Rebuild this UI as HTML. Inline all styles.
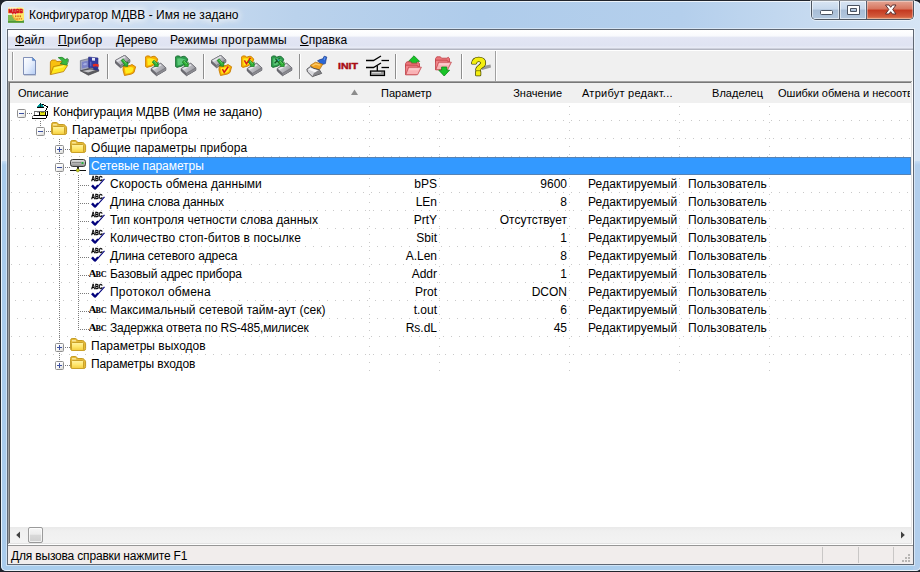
<!DOCTYPE html>
<html lang="ru">
<head>
<meta charset="utf-8">
<title>Конфигуратор МДВВ - Имя не задано</title>
<style>
html,body{margin:0;padding:0;}
body{width:920px;height:572px;overflow:hidden;background:#fff;font-family:"Liberation Sans",sans-serif;font-size:12px;color:#000;}
#win{position:absolute;left:0;top:0;width:920px;height:572px;overflow:hidden;background:#20242c;}
.abs{position:absolute;}
i{display:block;position:absolute;}
/* window frame */
#frame{position:absolute;left:1px;top:1px;width:920px;height:570px;border-radius:6px 6px 5px 5px;overflow:hidden;
 background:linear-gradient(90deg,#dde8f5 0%,#cfdff2 12%,#bad2ec 32%,#afcceb 52%,#b4cfec 74%,#c6daf0 88%,#d6e5f5 100%);}
#frame:after{content:"";position:absolute;left:0;top:0;right:0;bottom:0;border-radius:6px 6px 5px 5px;box-shadow:inset 0 0 0 1px rgba(255,255,255,.75);}
#fl1{position:absolute;left:0;top:28px;width:6px;height:132px;background:#dbe7f5;}
#fl2{position:absolute;left:0;top:160px;width:6px;height:410px;background:linear-gradient(#c6dcf3 0,#a9cbec 4px,#a9cbec 100%);}
#fr1{position:absolute;left:912px;top:28px;width:8px;height:132px;background:#d6e4f4;}
#fr2{position:absolute;left:912px;top:160px;width:8px;height:410px;background:linear-gradient(#c6dcf3 0,#b2ceec 4px,#b2ceec 100%);}
#fb{position:absolute;left:6px;top:563px;width:906px;height:7px;background:#aacdec;}
#title{position:absolute;left:29px;top:7px;height:16px;line-height:16px;font-size:12px;white-space:nowrap;color:#000;text-shadow:0 0 6px #fff,0 0 8px #fff,0 0 10px #fff;}
#cborder{position:absolute;left:7px;top:29px;width:907px;height:536px;box-sizing:border-box;border:1px solid #5f6773;box-shadow:0 0 0 1px rgba(255,255,255,.45);background:#f0f0f0;}
/* caption buttons */
#capbtns{position:absolute;left:811px;top:1px;width:103px;height:19px;border:1px solid #4d5560;border-top:none;border-radius:0 0 5px 5px;box-sizing:border-box;overflow:hidden;box-shadow:0 0 0 1px rgba(255,255,255,.5);}
.cb{position:absolute;top:0;height:18px;box-sizing:border-box;}
#bmin{left:0;width:28px;background:linear-gradient(#d9e5f3 0%,#c7d8ec 45%,#a8bdd6 50%,#b3c8df 100%);border-right:1px solid #566070;box-shadow:inset 0 0 0 1px rgba(255,255,255,.55);}
#bmax{left:28px;width:27px;background:linear-gradient(#d9e5f3 0%,#c7d8ec 45%,#a8bdd6 50%,#b3c8df 100%);border-right:1px solid #566070;box-shadow:inset 0 0 0 1px rgba(255,255,255,.55);}
#bclose{left:55px;width:46px;background:linear-gradient(#e4a594 0%,#d7745d 45%,#c3381f 50%,#d2593b 85%,#e08b60 100%);box-shadow:inset 0 0 0 1px rgba(255,255,255,.35);}
/* menubar */
#menubar{position:absolute;left:8px;top:30px;width:905px;height:18px;background:linear-gradient(#ffffff 0%,#fafbfd 30%,#eef0f8 38%,#e3e6f4 42%,#dfe3f2 85%,#e8ebf6 100%);}
#menuline{position:absolute;left:8px;top:48px;width:905px;height:1px;background:#cdd0dc;}
#menuline2{position:absolute;left:8px;top:49px;width:905px;height:1px;background:#b2b5c1;}
#menuline3{position:absolute;left:8px;top:50px;width:905px;height:1px;background:#ffffff;}
.mi{position:absolute;top:32px;height:16px;line-height:16px;white-space:nowrap;}
.mi u{text-decoration:underline;text-decoration-thickness:1px;text-underline-offset:1px;}
/* toolbar */
#toolbar{position:absolute;left:8px;top:51px;width:905px;height:30px;background:#f0f0f0;}
.sep{position:absolute;top:54px;width:1px;height:25px;background:#8e8e8e;}
.sep:after{content:"";position:absolute;left:1px;top:0;width:1px;height:25px;background:#fff;}
/* tree */
#treebox{position:absolute;left:8px;top:81px;width:905px;height:464px;background:#fff;}
#tb_t1{position:absolute;left:8px;top:81px;width:904px;height:1px;background:#a0a0a0;}
#tb_t2{position:absolute;left:9px;top:82px;width:902px;height:1px;background:#787878;}
#tb_l1{position:absolute;left:8px;top:81px;width:1px;height:463px;background:#a0a0a0;}
#tb_l2{position:absolute;left:9px;top:82px;width:1px;height:461px;background:#6e6e6e;}
#tb_r1{position:absolute;left:912px;top:81px;width:1px;height:464px;background:#fff;}
#tb_r2{position:absolute;left:911px;top:82px;width:1px;height:462px;background:#e3e3e3;}
#tb_b1{position:absolute;left:8px;top:544px;width:905px;height:1px;background:#fff;}
#tb_b2{position:absolute;left:9px;top:543px;width:903px;height:1px;background:#e3e3e3;}
#hdr{position:absolute;left:10px;top:83px;width:901px;height:20px;background:#f0f0f0;}
.h{position:absolute;top:86px;height:14px;line-height:14px;white-space:nowrap;font-size:11px;}
.hg{position:absolute;left:10px;width:901px;height:1px;background-image:linear-gradient(90deg,#c9c9c9 1px,transparent 1px);background-size:8px 1px;background-repeat:repeat-x;}
.vg{position:absolute;width:1px;background-image:linear-gradient(180deg,#c9c9c9 1px,transparent 1px);background-size:1px 8px;background-repeat:repeat-y;}
.vl{position:absolute;width:1px;background-image:linear-gradient(180deg,#7a7a7a 1px,transparent 1px);background-size:1px 2px;}
.hl{position:absolute;height:1px;background-image:linear-gradient(90deg,#7a7a7a 1px,transparent 1px);background-size:2px 1px;}
.t{position:absolute;height:16px;line-height:16px;white-space:nowrap;margin-top:1px;}
.t.sel{color:#fff;}
.selbar{position:absolute;height:18px;background:#3399ff;box-sizing:border-box;border:1px solid #5583b6;}
.bx{position:absolute;width:9px;height:9px;box-sizing:border-box;border:1px solid #8f8f8f;border-radius:1.5px;background:linear-gradient(135deg,#ffffff 0%,#fafafa 45%,#d8d8d4 100%);}
.bx .mn{left:1px;top:3px;width:5px;height:1px;background:#3c50a0;}
.bx .pl{left:3px;top:1px;width:1px;height:5px;background:#3c50a0;}
/* scrollbar */
#hscroll{position:absolute;left:10px;top:527px;width:901px;height:16px;background:linear-gradient(#e9e9e9 0%,#f0f0f0 25%,#f3f3f3 100%);}
#thumb{position:absolute;left:28px;top:527px;width:15px;height:16px;box-sizing:border-box;border:1px solid #9a9a9a;border-radius:2px;background:linear-gradient(#f6f6f6 0%,#ececec 45%,#d9d9d9 50%,#cfcfcf 100%);box-shadow:inset 0 0 0 1px rgba(255,255,255,.7);}
/* status */
#status{position:absolute;left:8px;top:545px;width:905px;height:19px;background:#f1edec;border-top:1px solid #969696;box-sizing:border-box;}
.spane{position:absolute;top:547px;width:1px;height:16px;background:#c9c7c6;}
</style>
</head>
<body>
<div id="win">
<div id="frame"><i id="fl1"></i><i id="fl2"></i><i id="fr1"></i><i id="fr2"></i><i id="fb"></i></div>
<svg class="abs" style="left:8px;top:7px" width="16" height="16" viewBox="0 0 16 16">
 <defs><clipPath id="icl"><rect x="0" y="0" width="16" height="16"/></clipPath></defs>
 <g clip-path="url(#icl)">
 <rect x="0" y="0" width="16" height="8" fill="#fff4b0" opacity=".55"/>
 <rect x="0" y="8" width="16" height="8" fill="#7cba52"/>
 <circle cx="11.5" cy="7.5" r="7" fill="#ffe764"/>
 <rect x="0" y="0" width="9" height="7.6" fill="#fdf3c4" opacity=".9"/>
 <path d="M4.5 7.6 Q5.5 12.5 10.5 13.2" stroke="#f0a830" stroke-width="1.2" fill="none"/>
 <rect x="0" y="14" width="16" height="2" fill="#4f9638"/>
 <rect x="0" y="15" width="16" height="1" fill="#6aaa4a"/>
 <text x="0.5" y="5.9" font-family="Liberation Sans, sans-serif" font-weight="bold" font-size="5.6" textLength="14.4" lengthAdjust="spacingAndGlyphs" fill="#d4141c" stroke="#d4141c" stroke-width=".6">МДВВ</text>
 <g fill="#d8681c"><rect x="7" y="8.4" width="1.4" height="1.8"/><rect x="9.3" y="8.4" width="1.4" height="1.8"/><rect x="11.6" y="8.4" width="1.4" height="1.8"/></g>
 <g fill="#e48a28"><rect x="8.4" y="11" width="1.3" height="1.6"/><rect x="10.6" y="11" width="1.3" height="1.6"/><rect x="12.8" y="11" width="1.3" height="1.6"/></g>
 </g>
</svg>
<div id="title">Конфигуратор МДВВ - Имя не задано</div>
<div id="capbtns">
 <div class="cb" id="bmin"></div><div class="cb" id="bmax"></div><div class="cb" id="bclose"></div>
</div>
<svg class="abs" style="left:811px;top:0" width="103" height="20" viewBox="0 0 103 20">
 <rect x="9.5" y="10.5" width="12" height="4" rx="1" fill="#fff" stroke="#4a5260" stroke-width="1"/>
 <path d="M36.5 5.5 H48.5 V14.5 H36.5 Z M39.5 8.5 V11.5 H45.5 V8.5 Z" fill="#fff" fill-rule="evenodd" stroke="#4a5260" stroke-width="1" stroke-linejoin="round"/>
 <path d="M74.5 5 H78 L79.7 7.3 L81.4 5 H85 L81.7 9.5 L85 14 H81.4 L79.7 11.7 L78 14 H74.5 L77.8 9.5 Z" fill="#fff" stroke="#5a3030" stroke-width="1" stroke-linejoin="round"/>
</svg>
<div id="cborder"></div>
<div id="menubar"></div><div id="menuline"></div><div id="menuline2"></div><div id="menuline3"></div>
<span class="mi" style="left:15px"><u>Ф</u>айл</span>
<span class="mi" style="left:58px;letter-spacing:.4px"><u>П</u>рибор</span>
<span class="mi" style="left:116px"><u>Д</u>ерево</span>
<span class="mi" style="left:170px;letter-spacing:.33px">Режимы программы</span>
<span class="mi" style="left:300px"><u>С</u>правка</span>
<div id="toolbar"></div>
<i style="left:12px;top:52px;width:1px;height:28px;background:#9a9a9a"></i><i style="left:13px;top:52px;width:1px;height:28px;background:#fff"></i>
<i class="sep" style="left:107px"></i>
<i class="sep" style="left:203px"></i>
<i class="sep" style="left:299px"></i>
<i class="sep" style="left:395px"></i>
<i class="sep" style="left:461px"></i>
<i style="left:495px;top:51px;width:1px;height:30px;background:#a0a0a0"></i><i style="left:496px;top:51px;width:1px;height:30px;background:#fff"></i>
<svg class="abs" style="left:22px;top:56px" width="16" height="20" viewBox="0 0 16 20">
<defs><linearGradient id="gdoc" x1="0" y1="0" x2="1" y2="1"><stop offset="0" stop-color="#ffffff"/><stop offset=".5" stop-color="#e6eefc"/><stop offset="1" stop-color="#b4ccf4"/></linearGradient></defs>
<path d="M1.5 1.5 H10.4 L13.5 4.6 V18.5 H1.5 Z" fill="url(#gdoc)" stroke="#7484b0" stroke-width=".9"/>
<path d="M10.4 1.5 V4.6 H13.5 Z" fill="#4a94e4" stroke="#6c80b4" stroke-width=".6"/>
<path d="M2 19.3 H14" stroke="#9aa4bc" stroke-width="1" opacity=".6"/>
</svg>
<svg class="abs" style="left:49px;top:55px" width="22" height="21" viewBox="0 0 22 21">
<path d="M1.3 19.4 L1.4 6.8 L3 5 H6.4 L8 6.5 L12.6 6.3 L13.4 9.4 L6 12 Z" fill="#f8c010" stroke="#b87400" stroke-width=".8" stroke-linejoin="round"/>
<path d="M1.6 19.6 L4.4 11.6 L17 9 L18.6 10.4 L14.6 16.6 Z" fill="#ffe61c" stroke="#b87800" stroke-width=".8" stroke-linejoin="round"/>
<path d="M5.4 12.4 L15.6 10.2 L14 12.4 L4.8 14.6 Z" fill="#fff870" opacity=".8"/>
<path d="M9.2 2.6 Q13.4 1 16.2 4.6 L18.4 3.4 L19.6 5 L17.8 10.2 L11.2 8.6 L13.4 7 Q12.2 4.4 9.2 2.6 Z" fill="#38b83e" stroke="#207c28" stroke-width=".7" stroke-linejoin="round"/>
<path d="M18.4 3.4 L19.6 5 L18.6 8" fill="none" stroke="#8c9490" stroke-width=".9"/>
</svg>
<svg class="abs" style="left:79px;top:55px" width="22" height="22" viewBox="0 0 22 22">
<path d="M1.4 5.6 L10.5 3.4 V13.6 L1.4 15.8 Z" fill="#a4a8bc" stroke="#70768c" stroke-width=".8" stroke-linejoin="round"/>
<path d="M2.8 7 L9.4 5.4 V12 L2.8 13.6 Z" fill="#7c84c8"/>
<path d="M4 9.4 Q6 7 8.2 8.8 Q6.4 11.6 4 9.4 Z" fill="#a4aee4"/>
<path d="M9.6 2 L19 3 V13.4 L9.6 12.4 Z" fill="#343ca0" stroke="#282e80" stroke-width=".6" stroke-linejoin="round"/>
<path d="M13 2.8 L16 3.1 V5.8 L13 5.5 Z" fill="#e4e6f4"/>
<path d="M11 6.6 L12.4 6.8 V11.4 L11 11.2 Z" fill="#5a64c4"/>
<path d="M1.4 15.8 L10.5 13.6 L19 14.2 L20 16 L9.4 20.2 Z" fill="#5c5c60" stroke="#444448" stroke-width=".7" stroke-linejoin="round"/>
<path d="M3.4 16 L10.8 14.4 L16.4 15 L9.2 17.6 Z" fill="#c4c4c8"/>
<path d="M13.6 9.4 Q16.4 8 19.8 9.6 L19.4 12 Q16.6 10.8 14.2 11.8 Z" fill="#e42c20"/>
<path d="M14 12.4 L19 13.2 L19.8 15.6 L14.6 14.8 Z" fill="#2c3288"/>
</svg>
<svg class="abs" style="left:115px;top:55px" width="22" height="23" viewBox="0 0 22 23"><defs><linearGradient id="gdev" x1="0" y1="0" x2="1" y2="0.6"><stop offset="0" stop-color="#e2e2e8"/><stop offset=".5" stop-color="#c2c2c8"/><stop offset="1" stop-color="#98989e"/></linearGradient></defs><g transform="translate(0,0) scale(1)">
<path d="M0.2 5.6 L9.7 0.3 L14.8 4.8 V7.2 L5.5 12.7 L0.3 8 Z" fill="#6c6c72" stroke="#55555c" stroke-width=".9" stroke-linejoin="round"/>
<path d="M5.5 10.2 L14.8 4.8 V7.2 L5.5 12.7 Z" fill="#8a8a90"/>
<path d="M0.2 5.6 L9.7 0.3 L14.8 4.8 L5.5 10.2 Z" fill="url(#gdev)" stroke="#6a6a70" stroke-width=".5" stroke-linejoin="round"/>
<path d="M1.6 5.6 L9.4 1.3 L10.6 2.3 L2.8 6.7 Z" fill="#f0f0f4" opacity=".75"/>
</g><g transform="translate(0,0)">
<path d="M8.2 11.5 L15 10.5 L17 9.5 L20.6 11.8 L19 17.5 L16.5 19 L9.5 20.5 L8 15 Z" fill="#f8b000" stroke="#c87c00" stroke-width=".9" stroke-linejoin="round"/>
<path d="M9.8 13 L16 12 L18.6 12.8 L17.6 16.6 L15.6 17.8 L10.6 18.8 Z" fill="#ffec20"/>
</g><g transform="translate(7.2,4.6) rotate(51.54629078329404)">
<path d="M0 -1.3 H5.48 V-3 L8.68 0 L5.48 3 V1.3 H0 Z" fill="#30b436" stroke="#1a7a22" stroke-width=".7" stroke-linejoin="round"/>
<path d="M0.4 -0.7 H5.68" stroke="#90e890" stroke-width=".7" opacity=".8"/>
</g></svg>
<svg class="abs" style="left:145px;top:55px" width="22" height="23" viewBox="0 0 22 23"><defs><linearGradient id="gdev" x1="0" y1="0" x2="1" y2="0.6"><stop offset="0" stop-color="#e2e2e8"/><stop offset=".5" stop-color="#c2c2c8"/><stop offset="1" stop-color="#98989e"/></linearGradient></defs><g transform="translate(0,0) scale(1)">
<path d="M0.3 2 L2 0.9 L4.5 1 L5.6 2.3 L8 1.3 L10 1.4 L12.8 4 L11.5 8 L7 11 L2 12.4 L0.4 11.4 Z" fill="#f8b000" stroke="#c87c00" stroke-width=".9" stroke-linejoin="round"/>
<path d="M2.2 3.4 L6 3.2 L10.6 4.6 L9.6 7.6 L6 9.8 L2.6 10.6 Z" fill="#ffec20"/>
</g><g transform="translate(6,8) scale(1)">
<path d="M0.2 5.6 L9.7 0.3 L14.8 4.8 V7.2 L5.5 12.7 L0.3 8 Z" fill="#6c6c72" stroke="#55555c" stroke-width=".9" stroke-linejoin="round"/>
<path d="M5.5 10.2 L14.8 4.8 V7.2 L5.5 12.7 Z" fill="#8a8a90"/>
<path d="M0.2 5.6 L9.7 0.3 L14.8 4.8 L5.5 10.2 Z" fill="url(#gdev)" stroke="#6a6a70" stroke-width=".5" stroke-linejoin="round"/>
<path d="M1.6 5.6 L9.4 1.3 L10.6 2.3 L2.8 6.7 Z" fill="#f0f0f4" opacity=".75"/>
</g><g transform="translate(8.2,6.2) rotate(47.202598161765806)">
<path d="M0 -1.3 H4.16 V-3 L7.36 0 L4.16 3 V1.3 H0 Z" fill="#30b436" stroke="#1a7a22" stroke-width=".7" stroke-linejoin="round"/>
<path d="M0.4 -0.7 H4.36" stroke="#90e890" stroke-width=".7" opacity=".8"/>
</g></svg>
<svg class="abs" style="left:175px;top:55px" width="22" height="23" viewBox="0 0 22 23"><defs><linearGradient id="gdev" x1="0" y1="0" x2="1" y2="0.6"><stop offset="0" stop-color="#e2e2e8"/><stop offset=".5" stop-color="#c2c2c8"/><stop offset="1" stop-color="#98989e"/></linearGradient></defs><g transform="translate(0,0) scale(1)">
<path d="M0.3 2 L2 0.9 L4.5 1 L5.6 2.3 L8 1.3 L10 1.4 L12.8 4 L11.5 8 L7 11 L2 12.4 L0.4 11.4 Z" fill="#2c9c4c" stroke="#1e6c36" stroke-width=".9" stroke-linejoin="round"/>
<path d="M2.2 3.4 L6 3.2 L10.6 4.6 L9.6 7.6 L6 9.8 L2.6 10.6 Z" fill="#5cc878"/>
</g><g transform="translate(6,8) scale(1)">
<path d="M0.2 5.6 L9.7 0.3 L14.8 4.8 V7.2 L5.5 12.7 L0.3 8 Z" fill="#6c6c72" stroke="#55555c" stroke-width=".9" stroke-linejoin="round"/>
<path d="M5.5 10.2 L14.8 4.8 V7.2 L5.5 12.7 Z" fill="#8a8a90"/>
<path d="M0.2 5.6 L9.7 0.3 L14.8 4.8 L5.5 10.2 Z" fill="url(#gdev)" stroke="#6a6a70" stroke-width=".5" stroke-linejoin="round"/>
<path d="M1.6 5.6 L9.4 1.3 L10.6 2.3 L2.8 6.7 Z" fill="#f0f0f4" opacity=".75"/>
</g><g transform="translate(8.2,6.2) rotate(47.202598161765806)">
<path d="M0 -1.3 H4.16 V-3 L7.36 0 L4.16 3 V1.3 H0 Z" fill="#30b436" stroke="#1a7a22" stroke-width=".7" stroke-linejoin="round"/>
<path d="M0.4 -0.7 H4.36" stroke="#90e890" stroke-width=".7" opacity=".8"/>
</g></svg>
<svg class="abs" style="left:211px;top:55px" width="22" height="23" viewBox="0 0 22 23"><defs><linearGradient id="gdev" x1="0" y1="0" x2="1" y2="0.6"><stop offset="0" stop-color="#e2e2e8"/><stop offset=".5" stop-color="#c2c2c8"/><stop offset="1" stop-color="#98989e"/></linearGradient></defs><g transform="translate(0,0) scale(1)">
<path d="M0.2 5.6 L9.7 0.3 L14.8 4.8 V7.2 L5.5 12.7 L0.3 8 Z" fill="#6c6c72" stroke="#55555c" stroke-width=".9" stroke-linejoin="round"/>
<path d="M5.5 10.2 L14.8 4.8 V7.2 L5.5 12.7 Z" fill="#8a8a90"/>
<path d="M0.2 5.6 L9.7 0.3 L14.8 4.8 L5.5 10.2 Z" fill="url(#gdev)" stroke="#6a6a70" stroke-width=".5" stroke-linejoin="round"/>
<path d="M1.6 5.6 L9.4 1.3 L10.6 2.3 L2.8 6.7 Z" fill="#f0f0f4" opacity=".75"/>
</g><g transform="translate(0,0)">
<path d="M8.2 11.5 L15 10.5 L17 9.5 L20.6 11.8 L19 17.5 L16.5 19 L9.5 20.5 L8 15 Z" fill="#f8b000" stroke="#c87c00" stroke-width=".9" stroke-linejoin="round"/>
<path d="M9.8 13 L16 12 L18.6 12.8 L17.6 16.6 L15.6 17.8 L10.6 18.8 Z" fill="#ffec20"/>
</g><g transform="translate(7.2,4.6) rotate(51.54629078329404)">
<path d="M0 -1.3 H5.48 V-3 L8.68 0 L5.48 3 V1.3 H0 Z" fill="#30b436" stroke="#1a7a22" stroke-width=".7" stroke-linejoin="round"/>
<path d="M0.4 -0.7 H5.68" stroke="#90e890" stroke-width=".7" opacity=".8"/>
</g><path d="M11.4 14.2 L13.2 17.4 L17.2 11.8" fill="none" stroke="#d81818" stroke-width="1.5"/></svg>
<svg class="abs" style="left:241px;top:55px" width="22" height="23" viewBox="0 0 22 23"><defs><linearGradient id="gdev" x1="0" y1="0" x2="1" y2="0.6"><stop offset="0" stop-color="#e2e2e8"/><stop offset=".5" stop-color="#c2c2c8"/><stop offset="1" stop-color="#98989e"/></linearGradient></defs><g transform="translate(0,0) scale(1)">
<path d="M0.3 2 L2 0.9 L4.5 1 L5.6 2.3 L8 1.3 L10 1.4 L12.8 4 L11.5 8 L7 11 L2 12.4 L0.4 11.4 Z" fill="#f8b000" stroke="#c87c00" stroke-width=".9" stroke-linejoin="round"/>
<path d="M2.2 3.4 L6 3.2 L10.6 4.6 L9.6 7.6 L6 9.8 L2.6 10.6 Z" fill="#ffec20"/>
</g><path d="M3.4 5.4 L5.4 8.8 L9.4 2.8" fill="none" stroke="#d81818" stroke-width="1.5"/><g transform="translate(6,8) scale(1)">
<path d="M0.2 5.6 L9.7 0.3 L14.8 4.8 V7.2 L5.5 12.7 L0.3 8 Z" fill="#6c6c72" stroke="#55555c" stroke-width=".9" stroke-linejoin="round"/>
<path d="M5.5 10.2 L14.8 4.8 V7.2 L5.5 12.7 Z" fill="#8a8a90"/>
<path d="M0.2 5.6 L9.7 0.3 L14.8 4.8 L5.5 10.2 Z" fill="url(#gdev)" stroke="#6a6a70" stroke-width=".5" stroke-linejoin="round"/>
<path d="M1.6 5.6 L9.4 1.3 L10.6 2.3 L2.8 6.7 Z" fill="#f0f0f4" opacity=".75"/>
</g><g transform="translate(8.2,6.2) rotate(47.202598161765806)">
<path d="M0 -1.3 H4.16 V-3 L7.36 0 L4.16 3 V1.3 H0 Z" fill="#30b436" stroke="#1a7a22" stroke-width=".7" stroke-linejoin="round"/>
<path d="M0.4 -0.7 H4.36" stroke="#90e890" stroke-width=".7" opacity=".8"/>
</g></svg>
<svg class="abs" style="left:271px;top:55px" width="22" height="23" viewBox="0 0 22 23"><defs><linearGradient id="gdev" x1="0" y1="0" x2="1" y2="0.6"><stop offset="0" stop-color="#e2e2e8"/><stop offset=".5" stop-color="#c2c2c8"/><stop offset="1" stop-color="#98989e"/></linearGradient></defs><g transform="translate(0,0) scale(1)">
<path d="M0.3 2 L2 0.9 L4.5 1 L5.6 2.3 L8 1.3 L10 1.4 L12.8 4 L11.5 8 L7 11 L2 12.4 L0.4 11.4 Z" fill="#2c9c4c" stroke="#1e6c36" stroke-width=".9" stroke-linejoin="round"/>
<path d="M2.2 3.4 L6 3.2 L10.6 4.6 L9.6 7.6 L6 9.8 L2.6 10.6 Z" fill="#5cc878"/>
</g><path d="M4.4 3.6 L8.4 8.4 M8.6 3.4 L3.6 8.2" fill="none" stroke="#145028" stroke-width="1.3"/><path d="M6.5 4.5 L9.5 6.5" stroke="#30c8c0" stroke-width="1.4"/><g transform="translate(6,8) scale(1)">
<path d="M0.2 5.6 L9.7 0.3 L14.8 4.8 V7.2 L5.5 12.7 L0.3 8 Z" fill="#6c6c72" stroke="#55555c" stroke-width=".9" stroke-linejoin="round"/>
<path d="M5.5 10.2 L14.8 4.8 V7.2 L5.5 12.7 Z" fill="#8a8a90"/>
<path d="M0.2 5.6 L9.7 0.3 L14.8 4.8 L5.5 10.2 Z" fill="url(#gdev)" stroke="#6a6a70" stroke-width=".5" stroke-linejoin="round"/>
<path d="M1.6 5.6 L9.4 1.3 L10.6 2.3 L2.8 6.7 Z" fill="#f0f0f4" opacity=".75"/>
</g><g transform="translate(8.2,6.2) rotate(47.202598161765806)">
<path d="M0 -1.3 H4.16 V-3 L7.36 0 L4.16 3 V1.3 H0 Z" fill="#30b436" stroke="#1a7a22" stroke-width=".7" stroke-linejoin="round"/>
<path d="M0.4 -0.7 H4.36" stroke="#90e890" stroke-width=".7" opacity=".8"/>
</g></svg>
<svg class="abs" style="left:306px;top:55px" width="24" height="23" viewBox="0 0 24 23">
<path d="M18.2 1.2 L20.8 2 L20 5 L19.4 8.6 L16 9.6 L11.5 5.8 L14 4.6 L16.8 3.8 Z" fill="#2a66d4" stroke="#1c3c8c" stroke-width=".7" stroke-linejoin="round"/>
<path d="M18.4 2 L19.6 2.4 L18.8 5.2 L17.6 4.8 Z" fill="#6a9cf0" opacity=".8"/>
<path d="M4.3 10.4 L9.4 7.2 L16.8 9.2 L13.4 14.8 L7.8 13.4 Z" fill="#f0a224" stroke="#a86808" stroke-width=".7" stroke-linejoin="round"/>
<path d="M6 10.2 L9.6 8.2 L14.6 9.6 L13.8 10.8 L9.6 9.8 L6.8 11.2 Z" fill="#ffd070" opacity=".85"/>
<path d="M0.9 14.2 L4.3 11.6 L7.8 13.4 L13.4 14.8 L15.6 18.4 L6.3 21.6 L1.4 16.8 Z" fill="#d8d8dc" stroke="#444448" stroke-width=".9" stroke-linejoin="round"/>
<path d="M2.4 14.6 L4.6 13 L11.6 15.6 L9.4 17.4 Z" fill="#f8f8fa"/>
<path d="M6.3 21.6 L15.6 18.4 L13.4 14.8 L8 18 Z" fill="#707074" opacity=".8"/>
</svg>
<span class="abs" style="left:338px;top:59.4px;width:22px;height:14px;line-height:14px;font-size:9.4px;font-weight:bold;color:#a80c14;letter-spacing:0;white-space:nowrap;-webkit-text-stroke:.45px #a80c14;transform:scaleX(1.13);transform-origin:0 0;">INIT</span>
<svg class="abs" style="left:365px;top:55px" width="26" height="23" viewBox="0 0 26 23">
<g stroke="#000" stroke-width="1.3" fill="none">
<path d="M1 5.5 H8.5 L16 1"/><path d="M16.5 5.5 H24"/>
<path d="M1 12.5 H8.5 L16 8"/><path d="M16.5 12.5 H24"/>
<path d="M12.3 10.6 V16"/>
</g>
<rect x="5.5" y="16" width="14" height="4.5" fill="#9a9a9a" stroke="#000" stroke-width="1.2"/>
<rect x="7" y="17" width="9" height="1.2" fill="#d8d8d8"/>
</svg>
<svg class="abs" style="left:404px;top:55px" width="20" height="22" viewBox="0 0 20 22"><path d="M10 0.8 L15.6 6.4 H12.6 V9.5 H7.4 V6.4 H4.4 Z" fill="#18c428" stroke="#0e8a1a" stroke-width=".8" stroke-linejoin="round"/><g transform="translate(1,6.2)">
<path d="M0.5 2.5 L1.8 0.6 H5.4 L6.6 2 H12 L13.2 1 L14.5 2.4 V6 H0.5 Z" fill="#ec757a" stroke="#bc3c44" stroke-width=".8" stroke-linejoin="round"/>
<path d="M0.5 4 H12 L13 5 L11.5 13.5 H0.5 Z" fill="#f08388" stroke="#bc3c44" stroke-width=".8" stroke-linejoin="round"/>
<path d="M0.8 13.5 L3.6 6 H16.4 L12.6 13.5 Z" fill="#f9b2b5" stroke="#c4484e" stroke-width=".8" stroke-linejoin="round"/>
<path d="M4.4 7 H14.6 L13.6 9 H3.6 Z" fill="#fbd0d2" opacity=".8"/>
</g></svg>
<svg class="abs" style="left:434px;top:55px" width="20" height="23" viewBox="0 0 20 23"><g transform="translate(1,1.2)">
<path d="M0.5 2.5 L1.8 0.6 H5.4 L6.6 2 H12 L13.2 1 L14.5 2.4 V6 H0.5 Z" fill="#ec757a" stroke="#bc3c44" stroke-width=".8" stroke-linejoin="round"/>
<path d="M0.5 4 H12 L13 5 L11.5 13.5 H0.5 Z" fill="#f08388" stroke="#bc3c44" stroke-width=".8" stroke-linejoin="round"/>
<path d="M0.8 13.5 L3.6 6 H16.4 L12.6 13.5 Z" fill="#f9b2b5" stroke="#c4484e" stroke-width=".8" stroke-linejoin="round"/>
<path d="M4.4 7 H14.6 L13.6 9 H3.6 Z" fill="#fbd0d2" opacity=".8"/>
</g><path d="M7.6 12 H12.8 V15.2 H15.6 L10.2 21 L4.8 15.2 H7.6 Z" fill="#18c428" stroke="#0e8a1a" stroke-width=".8" stroke-linejoin="round"/></svg>
<svg class="abs" style="left:470px;top:54px;will-change:transform" width="24" height="24" viewBox="0 0 24 24">
<path d="M11 12.4 L20.5 10.6 L21 13.6 L12 16 Z" fill="#8a8a8a" opacity=".85"/>
<text x="1.2" y="20.8" font-family="Liberation Sans, sans-serif" font-weight="bold" font-size="24.5" fill="#f4ee10" stroke="#3c3c00" stroke-width="2.6" stroke-linejoin="round" paint-order="stroke">?</text>
<text x="1.2" y="20.8" font-family="Liberation Sans, sans-serif" font-weight="bold" font-size="24.5" fill="#f4ee10" stroke="#f4ee10" stroke-width="1.1" stroke-linejoin="round">?</text>
</svg>
<div id="treebox"></div>
<div id="hdr"></div>
<span class="h" style="left:18px">Описание</span>
<svg class="abs" style="left:350px;top:89px" width="9" height="7" viewBox="0 0 9 7"><path d="M4.5 0.5 L8 6 H1 Z" fill="#8c8c8c"/></svg>
<span class="h" style="left:381px">Параметр</span>
<span class="h" style="right:358px">Значение</span>
<span class="h" style="left:582px;letter-spacing:.25px">Атрибут редакт...</span>
<span class="h" style="right:157px">Владелец</span>
<span class="h" style="left:778px;width:132px;overflow:hidden">Ошибки обмена и несоотв</span>
<div class="hg" style="top:120px;background-position:1px 0"></div>
<div class="hg" style="top:138px;background-position:3px 0"></div>
<div class="hg" style="top:156px;background-position:5px 0"></div>
<div class="hg" style="top:174px;background-position:7px 0"></div>
<div class="hg" style="top:192px;background-position:1px 0"></div>
<div class="hg" style="top:210px;background-position:3px 0"></div>
<div class="hg" style="top:228px;background-position:5px 0"></div>
<div class="hg" style="top:246px;background-position:7px 0"></div>
<div class="hg" style="top:264px;background-position:1px 0"></div>
<div class="hg" style="top:282px;background-position:3px 0"></div>
<div class="hg" style="top:300px;background-position:5px 0"></div>
<div class="hg" style="top:318px;background-position:7px 0"></div>
<div class="hg" style="top:336px;background-position:1px 0"></div>
<div class="hg" style="top:354px;background-position:3px 0"></div>
<div class="vg" style="left:369px;top:103px;height:270px;background-position:0 3px"></div>
<div class="vg" style="left:439px;top:103px;height:270px;background-position:0 3px"></div>
<div class="vg" style="left:569px;top:103px;height:270px;background-position:0 3px"></div>
<div class="vg" style="left:679px;top:103px;height:270px;background-position:0 3px"></div>
<div class="vg" style="left:769px;top:103px;height:270px;background-position:0 3px"></div>
<div class="hl" style="left:27px;top:113px;width:5px"></div>
<div class="vl" style="left:40px;top:121px;height:6px"></div>
<div class="hl" style="left:46px;top:131px;width:5px"></div>
<div class="vl" style="left:59px;top:139px;height:6px"></div>
<div class="hl" style="left:65px;top:149px;width:5px"></div>
<div class="vl" style="left:59px;top:155px;height:8px"></div>
<div class="hl" style="left:65px;top:167px;width:5px"></div>
<div class="vl" style="left:59px;top:173px;height:170px"></div>
<div class="hl" style="left:65px;top:347px;width:5px"></div>
<div class="vl" style="left:59px;top:353px;height:8px"></div>
<div class="hl" style="left:65px;top:365px;width:5px"></div>
<div class="vl" style="left:78px;top:175px;height:155px"></div>
<div class="hl" style="left:80px;top:185px;width:9px"></div>
<div class="hl" style="left:80px;top:203px;width:9px"></div>
<div class="hl" style="left:80px;top:221px;width:9px"></div>
<div class="hl" style="left:80px;top:239px;width:9px"></div>
<div class="hl" style="left:80px;top:257px;width:9px"></div>
<div class="hl" style="left:80px;top:275px;width:9px"></div>
<div class="hl" style="left:80px;top:293px;width:9px"></div>
<div class="hl" style="left:80px;top:311px;width:9px"></div>
<div class="hl" style="left:80px;top:329px;width:9px"></div>
<div class="bx" style="left:17px;top:109px"><i class="mn"></i></div>
<svg class="abs" style="left:32px;top:103px" width="16" height="16" viewBox="0 0 16 16" shape-rendering="crispEdges"><rect x="8" y="0" width="1" height="1" fill="#006868"/><rect x="7" y="1" width="3" height="1" fill="#009090"/><rect x="6" y="2" width="5" height="1" fill="#00a8a8"/><rect x="6" y="3" width="5" height="1" fill="#008888"/><rect x="5" y="3" width="1" height="1" fill="#40b0b0"/><rect x="11" y="3" width="1" height="1" fill="#40b0b0"/><rect x="8" y="0" width="1" height="4" fill="#003838"/><rect x="5" y="4" width="7" height="1" fill="#000"/><rect x="10" y="1" width="2" height="1" fill="#000"/><rect x="12" y="2" width="2" height="1" fill="#000"/><rect x="14" y="3" width="2" height="1" fill="#000"/><rect x="15" y="4" width="1" height="1" fill="#000"/><rect x="14" y="5" width="1" height="2" fill="#000"/><rect x="13" y="7" width="1" height="1" fill="#000"/><rect x="2" y="8" width="13" height="1" fill="#707070"/><rect x="2" y="9" width="1" height="3" fill="#808080"/><rect x="3" y="9" width="4" height="3" fill="#fff"/><rect x="7" y="9" width="1" height="3" fill="#000"/><rect x="8" y="9" width="5" height="3" fill="#e4e418"/><rect x="13" y="9" width="1" height="3" fill="#000"/><rect x="9" y="9" width="3" height="1" fill="#909000"/><rect x="5" y="9" width="2" height="1" fill="#c0c0c0"/><rect x="2" y="12" width="6" height="1" fill="#000"/><rect x="8" y="12" width="6" height="1" fill="#000"/><rect x="15" y="8" width="1" height="5" fill="#000"/><rect x="14" y="12" width="1" height="3" fill="#000"/><rect x="1" y="13" width="13" height="2" fill="#fff"/><rect x="1" y="12" width="1" height="1" fill="#808080"/><rect x="0" y="13" width="1" height="2" fill="#808080"/><rect x="0" y="15" width="14" height="1" fill="#000"/></svg>
<span class="t" style="left:53px;top:103px;letter-spacing:-0.08px">Конфигурация МДВВ (Имя не задано)</span>
<div class="bx" style="left:36px;top:127px"><i class="mn"></i></div>
<svg class="abs" style="left:51px;top:121px" width="17" height="16" viewBox="0 0 17 16">
<defs><linearGradient id="fg51_121" x1="0" y1="0" x2="0" y2="1"><stop offset="0" stop-color="#fff3a4"/><stop offset=".5" stop-color="#ffe76e"/><stop offset="1" stop-color="#f4cd3c"/></linearGradient></defs>
<path d="M0.6 3.4 Q0.6 1.5 2.2 1.5 H5.4 Q6.4 1.5 6.9 2.4 L7.4 3.5 H12.4 Q13.4 3.5 14 4.3 L15.2 5.6 Q15.6 6.2 15.6 7 V11.6 Q15.6 13.5 13.8 13.5 H2.4 Q0.6 13.5 0.6 11.8 Z" fill="#e6bb38" stroke="#c39a22" stroke-width="1"/>
<path d="M2 3 H5.6 L6.4 4.4 H2 Z" fill="#fff6c0" opacity=".7"/>
<path d="M1.5 6.4 Q1.5 5.5 2.4 5.5 H12.6 Q13.5 5.5 13.5 6.4 V12.4 Q13.5 13.5 12.4 13.5 H2.6 Q1.5 13.5 1.5 12.4 Z" fill="url(#fg51_121)" stroke="#caa128" stroke-width="1"/>
</svg>
<span class="t" style="left:72px;top:121px;letter-spacing:0.09px">Параметры прибора</span>
<div class="bx" style="left:55px;top:145px"><i class="mn"></i><i class="pl"></i></div>
<svg class="abs" style="left:70px;top:139px" width="17" height="16" viewBox="0 0 17 16">
<defs><linearGradient id="fg70_139" x1="0" y1="0" x2="0" y2="1"><stop offset="0" stop-color="#fff3a4"/><stop offset=".5" stop-color="#ffe76e"/><stop offset="1" stop-color="#f4cd3c"/></linearGradient></defs>
<path d="M0.6 3.4 Q0.6 1.5 2.2 1.5 H5.4 Q6.4 1.5 6.9 2.4 L7.4 3.5 H12.4 Q13.4 3.5 14 4.3 L15.2 5.6 Q15.6 6.2 15.6 7 V11.6 Q15.6 13.5 13.8 13.5 H2.4 Q0.6 13.5 0.6 11.8 Z" fill="#e6bb38" stroke="#c39a22" stroke-width="1"/>
<path d="M2 3 H5.6 L6.4 4.4 H2 Z" fill="#fff6c0" opacity=".7"/>
<path d="M1.5 6.4 Q1.5 5.5 2.4 5.5 H12.6 Q13.5 5.5 13.5 6.4 V12.4 Q13.5 13.5 12.4 13.5 H2.6 Q1.5 13.5 1.5 12.4 Z" fill="url(#fg70_139)" stroke="#caa128" stroke-width="1"/>
</svg>
<span class="t" style="left:91px;top:139px;letter-spacing:0.06px">Общие параметры прибора</span>
<div class="selbar" style="left:89px;top:157px;width:822px"></div>
<div class="bx" style="left:55px;top:163px"><i class="mn"></i></div>
<svg class="abs" style="left:70px;top:157px" width="17" height="16" viewBox="0 0 17 16">
<defs><linearGradient id="ng70_157" x1="0" y1="0" x2="0" y2="1"><stop offset="0" stop-color="#e4e4e4"/><stop offset=".45" stop-color="#bdbdbd"/><stop offset="1" stop-color="#8c8c8c"/></linearGradient></defs>
<rect x="0.5" y="2.5" width="15" height="7" rx="2.2" fill="url(#ng70_157)" stroke="#3a3a3a"/>
<rect x="2" y="5" width="9" height="1" fill="#8a8a8a"/>
<rect x="11.5" y="5" width="2" height="2" fill="#28b03c"/>
<rect x="7" y="10" width="2" height="3" fill="#222"/>
<rect x="0" y="13" width="16" height="1" fill="#111"/>
<circle cx="7.8" cy="13.3" r="1.6" fill="#c8d020" stroke="#6a7010" stroke-width=".5"/>
</svg>
<span class="t sel" style="left:91px;top:157px;letter-spacing:-0.065px">Сетевые параметры</span>
<svg class="abs" style="left:89px;top:175px;will-change:transform" width="18" height="18" viewBox="0 0 18 18">
<text x="2.2" y="6" font-family="Liberation Sans, sans-serif" font-weight="bold" font-size="6.8" textLength="11.4" lengthAdjust="spacingAndGlyphs" fill="#000" stroke="#000" stroke-width=".35">ABC</text>
<path d="M3 10.3 L6.3 14" stroke="#00007c" stroke-width="2.5" fill="none"/>
<path d="M6.1 14.3 L15.5 3.8" stroke="#00007c" stroke-width="1.1" fill="none"/>
<path d="M5.6 13.8 L9 10.1" stroke="#00007c" stroke-width="1.8" fill="none"/>
</svg>
<span class="t" style="left:110px;top:175px;letter-spacing:0.06px">Скорость обмена данными</span>
<span class="t r" style="right:483px;top:175px">bPS</span>
<span class="t r" style="right:353px;top:175px">9600</span>
<span class="t" style="left:588px;top:175px;letter-spacing:.12px">Редактируемый</span>
<span class="t" style="left:688px;top:175px;letter-spacing:.08px">Пользователь</span>
<svg class="abs" style="left:89px;top:193px;will-change:transform" width="18" height="18" viewBox="0 0 18 18">
<text x="2.2" y="6" font-family="Liberation Sans, sans-serif" font-weight="bold" font-size="6.8" textLength="11.4" lengthAdjust="spacingAndGlyphs" fill="#000" stroke="#000" stroke-width=".35">ABC</text>
<path d="M3 10.3 L6.3 14" stroke="#00007c" stroke-width="2.5" fill="none"/>
<path d="M6.1 14.3 L15.5 3.8" stroke="#00007c" stroke-width="1.1" fill="none"/>
<path d="M5.6 13.8 L9 10.1" stroke="#00007c" stroke-width="1.8" fill="none"/>
</svg>
<span class="t" style="left:110px;top:193px;letter-spacing:-0.12px">Длина слова данных</span>
<span class="t r" style="right:483px;top:193px">LEn</span>
<span class="t r" style="right:353px;top:193px">8</span>
<span class="t" style="left:588px;top:193px;letter-spacing:.12px">Редактируемый</span>
<span class="t" style="left:688px;top:193px;letter-spacing:.08px">Пользователь</span>
<svg class="abs" style="left:89px;top:211px;will-change:transform" width="18" height="18" viewBox="0 0 18 18">
<text x="2.2" y="6" font-family="Liberation Sans, sans-serif" font-weight="bold" font-size="6.8" textLength="11.4" lengthAdjust="spacingAndGlyphs" fill="#000" stroke="#000" stroke-width=".35">ABC</text>
<path d="M3 10.3 L6.3 14" stroke="#00007c" stroke-width="2.5" fill="none"/>
<path d="M6.1 14.3 L15.5 3.8" stroke="#00007c" stroke-width="1.1" fill="none"/>
<path d="M5.6 13.8 L9 10.1" stroke="#00007c" stroke-width="1.8" fill="none"/>
</svg>
<span class="t" style="left:110px;top:211px">Тип контроля четности слова данных</span>
<span class="t r" style="right:483px;top:211px">PrtY</span>
<span class="t r" style="right:353px;top:211px">Отсутствует</span>
<span class="t" style="left:588px;top:211px;letter-spacing:.12px">Редактируемый</span>
<span class="t" style="left:688px;top:211px;letter-spacing:.08px">Пользователь</span>
<svg class="abs" style="left:89px;top:229px;will-change:transform" width="18" height="18" viewBox="0 0 18 18">
<text x="2.2" y="6" font-family="Liberation Sans, sans-serif" font-weight="bold" font-size="6.8" textLength="11.4" lengthAdjust="spacingAndGlyphs" fill="#000" stroke="#000" stroke-width=".35">ABC</text>
<path d="M3 10.3 L6.3 14" stroke="#00007c" stroke-width="2.5" fill="none"/>
<path d="M6.1 14.3 L15.5 3.8" stroke="#00007c" stroke-width="1.1" fill="none"/>
<path d="M5.6 13.8 L9 10.1" stroke="#00007c" stroke-width="1.8" fill="none"/>
</svg>
<span class="t" style="left:110px;top:229px;letter-spacing:0.09px">Количество стоп-битов в посылке</span>
<span class="t r" style="right:483px;top:229px">Sbit</span>
<span class="t r" style="right:353px;top:229px">1</span>
<span class="t" style="left:588px;top:229px;letter-spacing:.12px">Редактируемый</span>
<span class="t" style="left:688px;top:229px;letter-spacing:.08px">Пользователь</span>
<svg class="abs" style="left:89px;top:247px;will-change:transform" width="18" height="18" viewBox="0 0 18 18">
<text x="2.2" y="6" font-family="Liberation Sans, sans-serif" font-weight="bold" font-size="6.8" textLength="11.4" lengthAdjust="spacingAndGlyphs" fill="#000" stroke="#000" stroke-width=".35">ABC</text>
<path d="M3 10.3 L6.3 14" stroke="#00007c" stroke-width="2.5" fill="none"/>
<path d="M6.1 14.3 L15.5 3.8" stroke="#00007c" stroke-width="1.1" fill="none"/>
<path d="M5.6 13.8 L9 10.1" stroke="#00007c" stroke-width="1.8" fill="none"/>
</svg>
<span class="t" style="left:110px;top:247px;letter-spacing:-0.11px">Длина сетевого адреса</span>
<span class="t r" style="right:483px;top:247px">A.Len</span>
<span class="t r" style="right:353px;top:247px">8</span>
<span class="t" style="left:588px;top:247px;letter-spacing:.12px">Редактируемый</span>
<span class="t" style="left:688px;top:247px;letter-spacing:.08px">Пользователь</span>
<svg class="abs" style="left:89px;top:265px" width="18" height="18" viewBox="0 0 18 18">
<text x="-0.6" y="12" font-family="Liberation Serif, serif" font-weight="bold" font-size="11" fill="#000">A</text>
<text x="6.4" y="12" font-family="Liberation Serif, serif" font-weight="bold" font-size="8.2" letter-spacing="-0.1" fill="#000">BC</text>
</svg>
<span class="t" style="left:110px;top:265px;letter-spacing:-0.13px">Базовый адрес прибора</span>
<span class="t r" style="right:483px;top:265px">Addr</span>
<span class="t r" style="right:353px;top:265px">1</span>
<span class="t" style="left:588px;top:265px;letter-spacing:.12px">Редактируемый</span>
<span class="t" style="left:688px;top:265px;letter-spacing:.08px">Пользователь</span>
<svg class="abs" style="left:89px;top:283px;will-change:transform" width="18" height="18" viewBox="0 0 18 18">
<text x="2.2" y="6" font-family="Liberation Sans, sans-serif" font-weight="bold" font-size="6.8" textLength="11.4" lengthAdjust="spacingAndGlyphs" fill="#000" stroke="#000" stroke-width=".35">ABC</text>
<path d="M3 10.3 L6.3 14" stroke="#00007c" stroke-width="2.5" fill="none"/>
<path d="M6.1 14.3 L15.5 3.8" stroke="#00007c" stroke-width="1.1" fill="none"/>
<path d="M5.6 13.8 L9 10.1" stroke="#00007c" stroke-width="1.8" fill="none"/>
</svg>
<span class="t" style="left:110px;top:283px;letter-spacing:0.23px">Протокол обмена</span>
<span class="t r" style="right:483px;top:283px">Prot</span>
<span class="t r" style="right:353px;top:283px">DCON</span>
<span class="t" style="left:588px;top:283px;letter-spacing:.12px">Редактируемый</span>
<span class="t" style="left:688px;top:283px;letter-spacing:.08px">Пользователь</span>
<svg class="abs" style="left:89px;top:301px" width="18" height="18" viewBox="0 0 18 18">
<text x="-0.6" y="12" font-family="Liberation Serif, serif" font-weight="bold" font-size="11" fill="#000">A</text>
<text x="6.4" y="12" font-family="Liberation Serif, serif" font-weight="bold" font-size="8.2" letter-spacing="-0.1" fill="#000">BC</text>
</svg>
<span class="t" style="left:110px;top:301px;letter-spacing:0.05px">Максимальный сетевой тайм-аут (сек)</span>
<span class="t r" style="right:483px;top:301px">t.out</span>
<span class="t r" style="right:353px;top:301px">6</span>
<span class="t" style="left:588px;top:301px;letter-spacing:.12px">Редактируемый</span>
<span class="t" style="left:688px;top:301px;letter-spacing:.08px">Пользователь</span>
<svg class="abs" style="left:89px;top:319px" width="18" height="18" viewBox="0 0 18 18">
<text x="-0.6" y="12" font-family="Liberation Serif, serif" font-weight="bold" font-size="11" fill="#000">A</text>
<text x="6.4" y="12" font-family="Liberation Serif, serif" font-weight="bold" font-size="8.2" letter-spacing="-0.1" fill="#000">BC</text>
</svg>
<span class="t" style="left:110px;top:319px;letter-spacing:-0.19px">Задержка ответа по RS-485,милисек</span>
<span class="t r" style="right:483px;top:319px">Rs.dL</span>
<span class="t r" style="right:353px;top:319px">45</span>
<span class="t" style="left:588px;top:319px;letter-spacing:.12px">Редактируемый</span>
<span class="t" style="left:688px;top:319px;letter-spacing:.08px">Пользователь</span>
<div class="bx" style="left:55px;top:343px"><i class="mn"></i><i class="pl"></i></div>
<svg class="abs" style="left:70px;top:337px" width="17" height="16" viewBox="0 0 17 16">
<defs><linearGradient id="fg70_337" x1="0" y1="0" x2="0" y2="1"><stop offset="0" stop-color="#fff3a4"/><stop offset=".5" stop-color="#ffe76e"/><stop offset="1" stop-color="#f4cd3c"/></linearGradient></defs>
<path d="M0.6 3.4 Q0.6 1.5 2.2 1.5 H5.4 Q6.4 1.5 6.9 2.4 L7.4 3.5 H12.4 Q13.4 3.5 14 4.3 L15.2 5.6 Q15.6 6.2 15.6 7 V11.6 Q15.6 13.5 13.8 13.5 H2.4 Q0.6 13.5 0.6 11.8 Z" fill="#e6bb38" stroke="#c39a22" stroke-width="1"/>
<path d="M2 3 H5.6 L6.4 4.4 H2 Z" fill="#fff6c0" opacity=".7"/>
<path d="M1.5 6.4 Q1.5 5.5 2.4 5.5 H12.6 Q13.5 5.5 13.5 6.4 V12.4 Q13.5 13.5 12.4 13.5 H2.6 Q1.5 13.5 1.5 12.4 Z" fill="url(#fg70_337)" stroke="#caa128" stroke-width="1"/>
</svg>
<span class="t" style="left:91px;top:337px">Параметры выходов</span>
<div class="bx" style="left:55px;top:361px"><i class="mn"></i><i class="pl"></i></div>
<svg class="abs" style="left:70px;top:355px" width="17" height="16" viewBox="0 0 17 16">
<defs><linearGradient id="fg70_355" x1="0" y1="0" x2="0" y2="1"><stop offset="0" stop-color="#fff3a4"/><stop offset=".5" stop-color="#ffe76e"/><stop offset="1" stop-color="#f4cd3c"/></linearGradient></defs>
<path d="M0.6 3.4 Q0.6 1.5 2.2 1.5 H5.4 Q6.4 1.5 6.9 2.4 L7.4 3.5 H12.4 Q13.4 3.5 14 4.3 L15.2 5.6 Q15.6 6.2 15.6 7 V11.6 Q15.6 13.5 13.8 13.5 H2.4 Q0.6 13.5 0.6 11.8 Z" fill="#e6bb38" stroke="#c39a22" stroke-width="1"/>
<path d="M2 3 H5.6 L6.4 4.4 H2 Z" fill="#fff6c0" opacity=".7"/>
<path d="M1.5 6.4 Q1.5 5.5 2.4 5.5 H12.6 Q13.5 5.5 13.5 6.4 V12.4 Q13.5 13.5 12.4 13.5 H2.6 Q1.5 13.5 1.5 12.4 Z" fill="url(#fg70_355)" stroke="#caa128" stroke-width="1"/>
</svg>
<span class="t" style="left:91px;top:355px;letter-spacing:-0.11px">Параметры входов</span>
<div id="hscroll"></div>
<svg class="abs" style="left:14px;top:530px" width="8" height="10" viewBox="0 0 8 10"><path d="M6 1.5 V8.5 L2.2 5 Z" fill="#404040"/></svg>
<div id="thumb"></div>
<svg class="abs" style="left:898px;top:530px" width="8" height="10" viewBox="0 0 8 10"><path d="M3 1.5 V8.5 L6.8 5 Z" fill="#404040"/></svg>
<div id="tb_t1"></div><div id="tb_t2"></div><div id="tb_l1"></div><div id="tb_l2"></div><div id="tb_r1"></div><div id="tb_r2"></div><div id="tb_b2"></div><div id="tb_b1"></div>
<div id="status"></div>
<span class="t" style="left:11px;top:547px;letter-spacing:-0.18px">Для вызова справки нажмите F1</span>
<i class="spane" style="left:822px"></i><i class="spane" style="left:858px"></i><i class="spane" style="left:893px"></i>
<svg class="abs" style="left:899px;top:552px" width="13" height="13" viewBox="0 0 13 13" shape-rendering="crispEdges">
 <g fill="#b8b6b4"><rect x="9" y="2" width="2" height="2"/><rect x="6" y="5" width="2" height="2"/><rect x="9" y="5" width="2" height="2"/><rect x="3" y="8" width="2" height="2"/><rect x="6" y="8" width="2" height="2"/><rect x="9" y="8" width="2" height="2"/></g>
</svg>
</div>
</body>
</html>
